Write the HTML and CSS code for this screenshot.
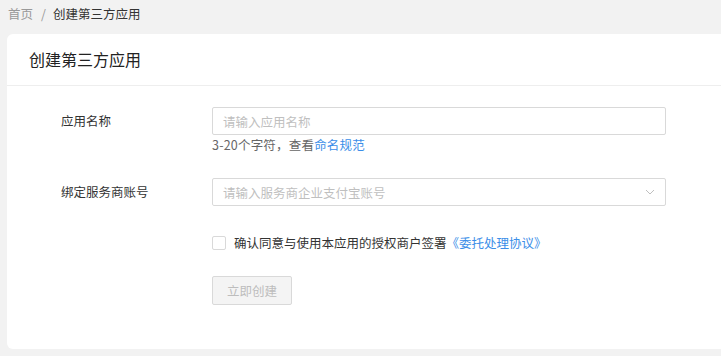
FILE: index.html
```html
<!DOCTYPE html>
<html>
<head>
    <meta charset="UTF-8">
    <title>创建第三方应用</title>
    <link rel="stylesheet" href="styles.css">
</head>
<body>
    <div class="breadcrumb"><span class="crumb-home">首页</span><span class="crumb-sep">/</span><span class="crumb-current">创建第三方应用</span></div>
    <div class="card">
        <div class="card-header">创建第三方应用</div>
        <form class="card-body">
            <div class="form-row">
                <label class="form-label" for="appName">应用名称</label>
                <div class="form-control">
                    <input class="text-input" type="text" id="appName" placeholder="请输入应用名称">
                    <div class="help">3-20个字符，查看<a class="link" href="#">命名规范</a></div>
                </div>
            </div>
            <div class="form-row row-select">
                <label class="form-label">绑定服务商账号</label>
                <div class="form-control">
                    <div class="select">
                        <span class="placeholder">请输入服务商企业支付宝账号</span>
                        <svg class="arrow" width="10" height="6" viewBox="0 0 10 6"><path d="M1 1l4 4 4-4" fill="none" stroke="#bfbfbf" stroke-width="1"/></svg>
                    </div>
                </div>
            </div>
            <div class="form-row row-agree">
                <div class="form-label"></div>
                <label class="agree">
                    <span class="checkbox"></span>
                    确认同意与使用本应用的授权商户签署<a class="link" href="#">《委托处理协议》</a>
                </label>
            </div>
            <div class="form-row row-submit">
                <div class="form-label"></div>
                <button class="btn" type="button" disabled>立即创建</button>
            </div>
        </form>
    </div>
</body>
</html>
```

FILE: styles.css
```css
body {
    margin: 0;
    background: #f2f2f2;
    font-family: "Noto Sans CJK SC", "Liberation Sans", sans-serif;
    font-size: 12.5px;
    color: #333;
    overflow: hidden;
}

.breadcrumb {
    height: 28px;
    line-height: 28px;
    padding-left: 8px;
}

.crumb-home {
    color: #999;
}

.crumb-sep {
    color: #999;
    margin: 0 7px 0 8px;
}

.crumb-current {
    color: #333;
}

.card {
    background: #fff;
    margin: 6px -20px 0 7px;
    border-radius: 6px;
    height: 315px;
}

.card-header {
    height: 51px;
    line-height: 51px;
    padding-left: 22px;
    font-size: 16px;
    color: #222;
    border-bottom: 1px solid #eeeeee;
}

.card-body {
    padding: 21px 0 0 54px;
}

.form-row {
    display: flex;
    align-items: flex-start;
}

.form-label {
    width: 151px;
    line-height: 28px;
    color: #333;
}

.form-control {
    width: 454px;
}

.text-input {
    box-sizing: border-box;
    width: 100%;
    height: 28px;
    margin: 0;
    padding: 0 10px;
    border: 1px solid #d9d9d9;
    border-radius: 2px;
    font-family: inherit;
    font-size: 12.5px;
    outline: none;
}

.text-input::placeholder {
    color: #bfbfbf;
}

.help {
    line-height: 20px;
    color: #666;
    letter-spacing: 0.2px;
}

.link {
    color: #3b8ee8;
    text-decoration: none;
}

.row-select {
    margin-top: 23px;
}

.select {
    box-sizing: border-box;
    height: 28px;
    border: 1px solid #d9d9d9;
    border-radius: 2px;
    padding: 0 10px;
    display: flex;
    align-items: center;
    justify-content: space-between;
}

.placeholder {
    color: #bfbfbf;
}

.row-agree {
    margin-top: 25px;
}

.row-agree .form-label {
    line-height: 24px;
}

.agree {
    display: flex;
    align-items: center;
    line-height: 24px;
    color: #333;
}

.checkbox {
    box-sizing: border-box;
    width: 14px;
    height: 14px;
    border: 1px solid #d9d9d9;
    border-radius: 2px;
    margin-right: 8px;
}

.row-submit {
    margin-top: 21px;
}

.btn {
    width: 80px;
    height: 29px;
    border: 1px solid #d9d9d9;
    border-radius: 2px;
    background: #f4f4f4;
    color: #bdbdbd;
    font-family: inherit;
    font-size: 12.5px;
    padding: 0;
}
```
